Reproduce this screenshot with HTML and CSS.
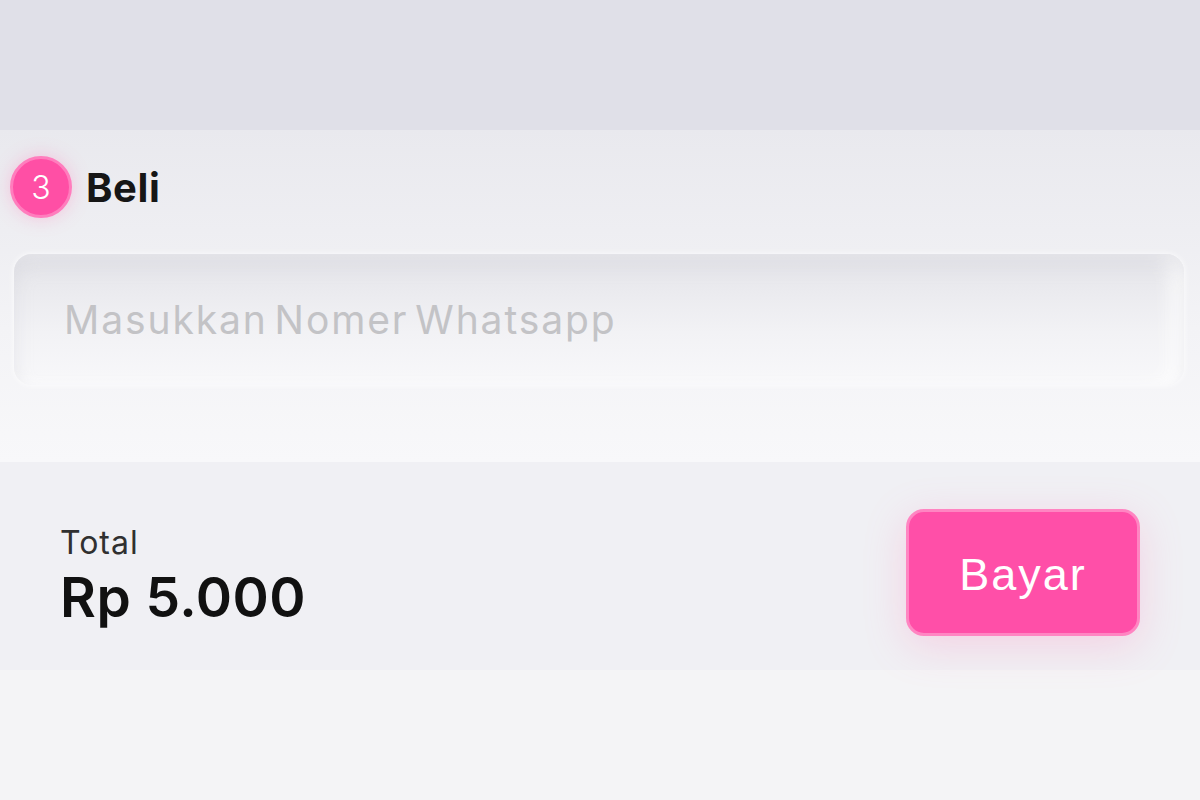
FILE: index.html
```html
<!DOCTYPE html>
<html>
<head>
    <meta charset="UTF-8">
    <meta name="viewport" content="width=device-width, initial-scale=1.0">
    <title>Beli</title>
    <link rel="stylesheet" href="styles.css">
</head>
<body>
    <div class="topband"></div>
    <section class="step">
        <div class="step-head">
            <span class="badge">3</span>
            <h2>Beli</h2>
        </div>
        <div class="field">
            <input type="text" placeholder="Masukkan Nomer Whatsapp">
        </div>
    </section>
    <div class="checkout">
        <div class="total">
            <span class="label">Total</span>
            <strong class="price">Rp 5.000</strong>
        </div>
        <button class="pay">Bayar</button>
    </div>
    <div class="rest"></div>
</body>
</html>
```

FILE: styles.css
```css
* { box-sizing: border-box; }
body {
    margin: 0;
    background: #f4f4f6;
    font-family: Inter, "Open Sans", sans-serif;
    color: #161616;
}
.topband {
    height: 130px;
    background: #e0e0e8;
}
.step {
    height: 332px;
    padding: 26px 16px 0 10px;
    background: linear-gradient(#e9e9ee, #f3f3f6 60%, #f8f8fa);
}
.step-head {
    display: flex;
    align-items: center;
    gap: 14px;
}
.badge {
    width: 62px; height: 62px;
    border-radius: 50%;
    background: #ff4fa5;
    border: 3px solid #ff7dbd;
    box-shadow: 0 0 18px rgba(255, 120, 180, 0.35);
    color: #fff;
    font-size: 32px;
    font-weight: 300;
    display: flex;
    align-items: center;
    justify-content: center;
}
.step-head h2 {
    margin: 0;
    font-size: 40px;
    font-weight: 700;
    letter-spacing: 0.6px;
}
.field {
    margin: 36px 0 0 4px;
}
.field input {
    width: 100%;
    height: 131px;
    border: none;
    outline: none;
    border-radius: 18px;
    padding: 0 50px;
    font-family: Inter, sans-serif;
    font-size: 39px;
    letter-spacing: 1.9px;
    word-spacing: -6px;
    background: linear-gradient(#e4e4e9, #f2f2f5 60%, #f8f8fa);
    box-shadow: inset 0 10px 18px rgba(200, 200, 210, 0.35), inset -14px 0 18px rgba(255,255,255,0.8), 0 0 6px rgba(255,255,255,0.9);
}
.field input::placeholder { color: #c3c3c6; }
.checkout {
    height: 208px;
    background: #f0f0f4;
    display: flex;
    align-items: center;
    justify-content: space-between;
    padding: 0 60px 0 60px;
}
.total {
    display: flex;
    flex-direction: column;
    gap: 2px;
    margin-top: 20px;
}
.label {
    font-size: 32px;
    letter-spacing: 1px;
    color: #303030;
}
.price {
    font-size: 55px;
    font-weight: 600;
    letter-spacing: 0.5px;
    color: #111;
}
.pay {
    width: 234px;
    height: 127px;
    margin-top: 12px;
    padding-top: 6px;
    border-radius: 18px;
    border: 3px solid #ff85c2;
    background: #ff4fa8;
    color: #fff;
    font-family: "Liberation Sans", Arial, sans-serif;
    font-size: 45px;
    letter-spacing: 2px;
    box-shadow: 0 10px 40px rgba(255, 120, 180, 0.25);
}
.rest { height: 130px; }
```
